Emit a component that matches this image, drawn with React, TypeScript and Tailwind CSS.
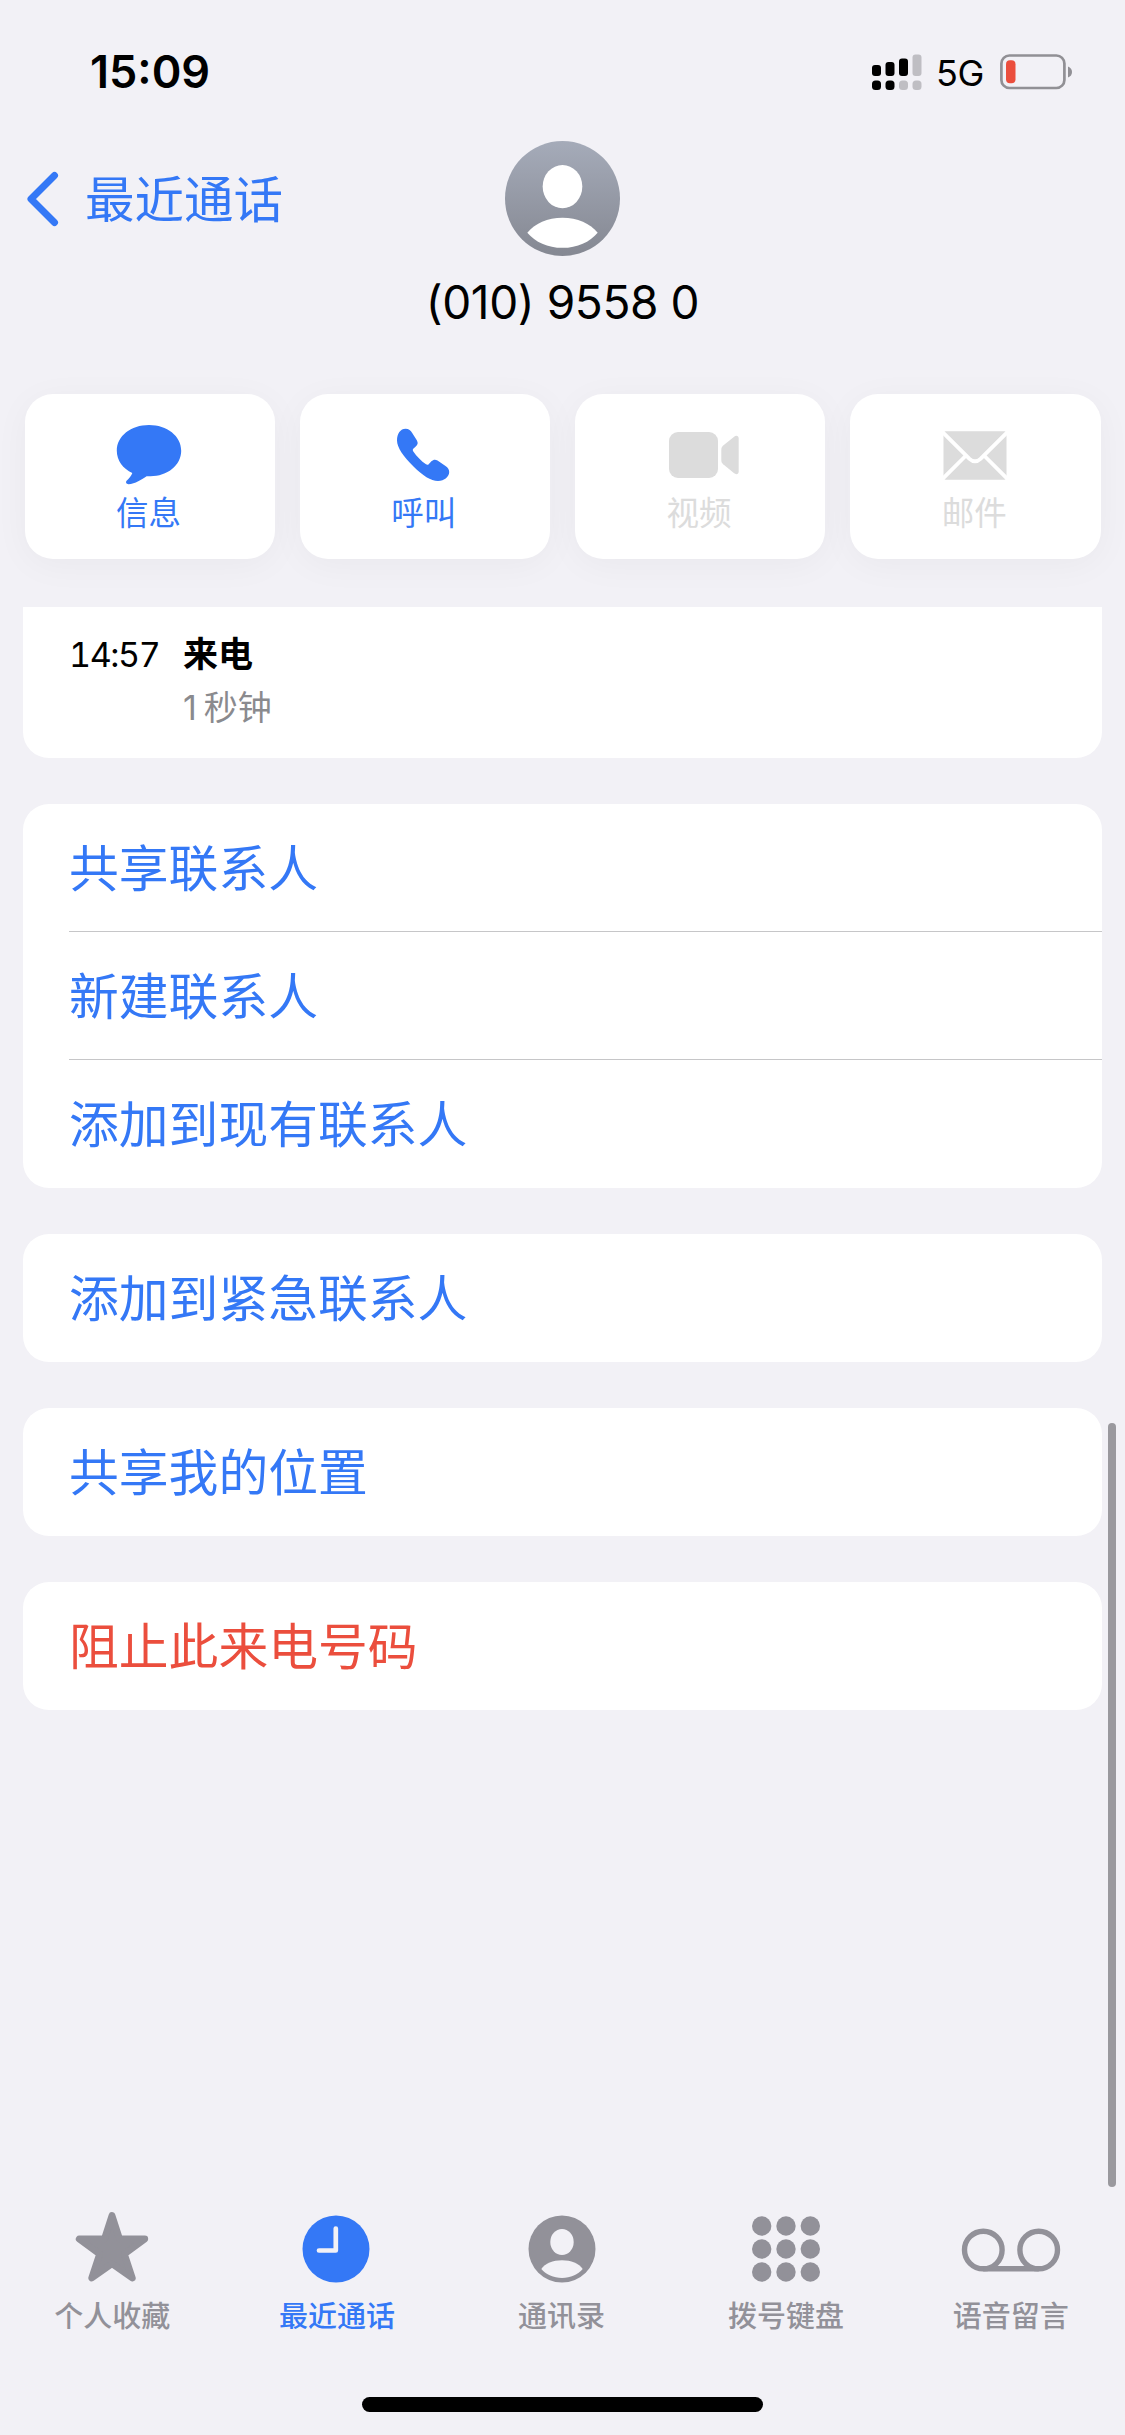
import clsx from "clsx";
import React from "react";

const BubbleIcon: React.FC = () => (
  <svg className="mr-[2px] w-[66px] h-[60px]" viewBox="0 0 66 60" fill="currentColor" aria-hidden="true">
    <path d="M33 0C51 0 65.2 11 65.2 25.7S51 51.2 34.500 51.200C33 51.200 31.800 51.200 30.600 51.300C26 54.500 19 59 12.500 59.200C10.300 59.200 9.400 57.300 10.600 55.800C13 53.300 15.500 50.600 16.300 48C7 43.600 0.800 35.500 0.800 25.700C0.800 11 15 0 33 0Z" />
  </svg>
);

const PhoneIcon: React.FC = () => (
  <svg className="mr-[3px] w-[54px] h-[54px]" viewBox="0 0 54 54" fill="currentColor" aria-hidden="true">
    <path d="M1 12.500C1 5.500 4.500 0.700 9.500 0.700C13 0.700 14.700 2.300 16.200 5L20.800 12.200C22.400 15 21.800 16.800 19.500 18.800L17.500 20.600C16.500 21.500 16.600 22.400 17.300 23.500C20.800 28.700 25.300 33 30 36.300C31.100 37 32 36.900 32.900 35.900L35.400 33.300C37.500 31.300 39.400 31.300 41.500 32.500L49.500 38C52 39.800 53.200 41.300 53.200 44C53.200 48.500 48.500 53 42 53C35 53 26.500 47.500 17.500 38.500C7.500 28.500 1 19.500 1 12.500Z" />
  </svg>
);

const VideoIcon: React.FC = () => (
  <svg className="ml-[7px] w-[70px] h-[46px]" viewBox="0 0 70 46" fill="currentColor" aria-hidden="true">
    <rect width="49" height="46" rx="9" />
    <path d="M52.300 18C52.300 16 52.800 15 54.200 13.600L64.800 4.900C67.500 2.800 69.700 4 69.700 6.800V39.200C69.700 42 67.500 43.200 64.800 41L54.200 32.200C52.800 31 52.300 30 52.300 28Z" />
  </svg>
);

const MailIcon: React.FC = () => (
  <svg className="w-[64px] h-[49px]" viewBox="0 0 64 49" aria-hidden="true">
    <rect x="0.500" y="0.300" width="63" height="48.400" rx="2" fill="currentColor" />
    <path
      d="M-1 0.500L26.500 27.800Q32 32.800 37.500 27.800L65 0.500M-1 48.500L22.500 25M65 48.500L41.500 25"
      fill="none"
      stroke="#fff"
      strokeWidth="3.800"
    />
  </svg>
);

const StarIcon: React.FC = () => (
  <svg className="mb-[5px] w-[74px] h-[72px]" viewBox="0 0 74 72" aria-hidden="true">
    <path
      d="M37 4.500L44.600 28H69.800L49.400 43L57.300 67L37 52.800L16.700 67L24.600 43L4.200 28H29.400Z"
      fill="currentColor"
      stroke="currentColor"
      strokeWidth="6.800"
      strokeLinejoin="round"
    />
  </svg>
);

const ClockIcon: React.FC = () => (
  <svg className="mr-px w-[68px] h-[68px]" viewBox="0 0 68 68" aria-hidden="true">
    <circle cx="34" cy="34" r="33.500" fill="currentColor" />
    <path
      d="M33.800 13.500V35.500H17"
      fill="none"
      stroke="#f2f1f6"
      strokeWidth="4.700"
      strokeLinecap="round"
      strokeLinejoin="round"
    />
  </svg>
);

const ContactIcon: React.FC = () => (
  <svg className="ml-[2px] w-[68px] h-[68px]" viewBox="0 0 68 68" aria-hidden="true">
    <circle cx="34" cy="34" r="33.500" fill="currentColor" />
    <ellipse cx="34" cy="27" rx="11.700" ry="13" fill="#f2f1f6" />
    <path d="M13.300 54C17 48.500 25 45.200 34 45.200S51 48.500 54.700 54C50 59.500 42.500 63 34 63S18 59.500 13.300 54Z" fill="#f2f1f6" />
  </svg>
);

const KeypadIcon: React.FC = () => (
  <svg className="w-[68px] h-[68px]" viewBox="0 0 68 68" fill="currentColor" aria-hidden="true">
    {[11, 34, 57].map((y) =>
      [9.7, 34, 58.3].map((x) => <circle key={`${x}-${y}`} cx={x} cy={y} r="9.700" />)
    )}
  </svg>
);

const VoicemailIcon: React.FC = () => (
  <svg
    className="mt-[2px] w-[100px] h-[44px]"
    viewBox="0 0 100 44"
    fill="none"
    stroke="currentColor"
    strokeWidth="5.400"
    aria-hidden="true"
  >
    <circle cx="22.300" cy="22" r="18.800" />
    <circle cx="77.700" cy="22" r="18.800" />
    <path d="M22.300 40.800H77.700" />
  </svg>
);

const StatusBar: React.FC = () => (
  <div className="flex h-[141px] items-start justify-between pl-[90px] pr-[52px] pt-[42px]">
    <span className="text-[45px] leading-[60px] font-semibold">15:09</span>
    <div className="flex h-[59px] items-center">
      <svg className="w-[50px] h-[36px]" viewBox="0 0 50 36" aria-hidden="true">
        <rect x="0" y="11" width="9" height="11" rx="3" />
        <rect x="13.500" y="8" width="9" height="14" rx="3" />
        <rect x="27" y="4.500" width="9" height="17.500" rx="3" />
        <rect x="40.500" y="0.500" width="9" height="21.500" rx="3" fill="#bfbec3" />
        <rect x="0" y="26.500" width="9" height="9.500" rx="3.500" />
        <rect x="13.500" y="26.500" width="9" height="9.500" rx="3.500" />
        <rect x="27" y="26.500" width="9" height="9.500" rx="3.500" fill="#bfbec3" />
        <rect x="40.500" y="26.500" width="9" height="9.500" rx="3.500" fill="#bfbec3" />
      </svg>
      <span className="ml-[14px] w-[64px] pt-[3px] text-[36px] leading-[44px] tracking-[-0.5px]">5G</span>
      <svg className="w-[73px] h-[36px]" viewBox="0 0 73 36" aria-hidden="true">
        <rect x="1.400" y="1.500" width="63" height="32.500" rx="8" fill="none" stroke="#919095" strokeWidth="2.700" />
        <rect x="6" y="6.200" width="9.500" height="23" rx="4" fill="#eb4e3d" />
        <path d="M68 12.500Q72 14 72 18T68 23.500Z" fill="#919095" />
      </svg>
    </div>
  </div>
);

const ContactHeader: React.FC = () => (
  <header className="h-[253px]">
    <div className="grid h-[116px] grid-cols-3 items-center">
      <button className="flex items-center pl-[25px] text-[#3478f6]">
        <svg className="w-[36px] h-[56px]" viewBox="0 0 36 56" fill="none" aria-hidden="true">
          <path
            d="M29.500 4.500L6 28L29.500 51.500"
            stroke="currentColor"
            strokeWidth="7"
            strokeLinecap="round"
            strokeLinejoin="round"
          />
        </svg>
        <span className="ml-[24px] whitespace-nowrap pt-[2px] text-[49.500px] leading-[60px]">最近通话</span>
      </button>
      <svg className="mb-px mr-px w-[115px] h-[115px] justify-self-center" viewBox="0 0 116 116" aria-hidden="true">
        <defs>
          <linearGradient id="avatar" x1="0" y1="0" x2="0" y2="1">
            <stop offset="0" stopColor="#a5abb9" />
            <stop offset="1" stopColor="#858892" />
          </linearGradient>
        </defs>
        <circle cx="58" cy="58" r="58" fill="url(#avatar)" />
        <ellipse cx="58" cy="46" rx="20" ry="21.800" fill="#fff" />
        <path d="M22.500 92.500C30 83 43 77.300 58 77.300S86 83 93.500 92.500C85.500 102 73 107.800 58 107.800S30.500 102 22.500 92.500Z" fill="#fff" />
      </svg>
    </div>
    <h1 className="mt-[15px] text-center text-[46px] leading-[60px] tracking-[-0.4px]">(010) 9558 0</h1>
  </header>
);

const ACTIONS = [
  { label: "信息", icon: <BubbleIcon />, enabled: true },
  { label: "呼叫", icon: <PhoneIcon />, enabled: true },
  { label: "视频", icon: <VideoIcon />, enabled: false },
  { label: "邮件", icon: <MailIcon />, enabled: false },
];

const QuickActions: React.FC = () => (
  <div className="grid h-[213px] grid-cols-4 items-start gap-[25px] px-[24.500px]">
    {ACTIONS.map((action) => (
      <button
        key={action.label}
        disabled={!action.enabled}
        className={clsx(
          "flex h-[165px] flex-col items-center rounded-[28px] bg-white pt-[30px] shadow-[0_6px_36px_rgba(0,0,0,0.04)]",
          action.enabled ? "text-[#3478f6]" : "text-[#dcdcdc]"
        )}
      >
        <span className="flex h-[62px] items-center">{action.icon}</span>
        <span className="mt-[4px] pr-[2px] text-[32.500px] leading-[48px]">{action.label}</span>
      </button>
    ))}
  </div>
);

const GROUPS = [
  ["共享联系人", "新建联系人", "添加到现有联系人"],
  ["添加到紧急联系人"],
  ["共享我的位置"],
];

const Row: React.FC<{ label: string; danger?: boolean }> = ({ label, danger }) => (
  <li className="group pl-[46px]">
    <button
      className={clsx(
        "flex h-[128px] w-full items-center border-b border-[#c6c6c8] pt-[4px] text-[49.800px] group-last:border-transparent",
        danger ? "text-[#eb4e3d]" : "text-[#3478f6]"
      )}
    >
      {label}
    </button>
  </li>
);

const TABS = [
  { label: "个人收藏", icon: <StarIcon /> },
  { label: "最近通话", icon: <ClockIcon />, active: true },
  { label: "通讯录", icon: <ContactIcon /> },
  { label: "拨号键盘", icon: <KeypadIcon /> },
  { label: "语音留言", icon: <VoicemailIcon /> },
];

const TabBar: React.FC = () => (
  <nav className="mr-[2px] grid h-[191px] grid-cols-5">
    {TABS.map((tab) => (
      <button
        key={tab.label}
        className={clsx(
          "flex flex-col items-center",
          tab.active ? "text-[#3478f6]" : "text-[#929199]"
        )}
      >
        <span className="flex h-[86px] items-center">{tab.icon}</span>
        <span className="mt-[2px] text-[29px] leading-[46px] font-medium">{tab.label}</span>
      </button>
    ))}
  </nav>
);

export default function App() {
  return (
    <div className="relative flex h-[2435px] w-[1125px] flex-col overflow-hidden bg-[#f2f1f6] font-['Inter','Noto_Sans_CJK_SC',sans-serif] text-black">
      <StatusBar />
      <ContactHeader />
      <QuickActions />

      <main className="relative flex flex-1 flex-col gap-[46px] px-[23px]">
        <section className="flex h-[151px] rounded-b-[26px] bg-white pl-[46px] pt-[21px] text-[34px] leading-[53px]">
          <time className="w-[114px] tabular-nums tracking-[-1.4px]">14:57</time>
          <div>
            <p className="text-[35px] font-bold">来电</p>
            <p className="text-[#8a8a8e]">
              <span className="mr-[7px]">1</span>秒钟
            </p>
          </div>
        </section>
        {GROUPS.map((rows) => (
          <ul key={rows[0]} className="rounded-[26px] bg-white">
            {rows.map((label) => (
              <Row key={label} label={label} />
            ))}
          </ul>
        ))}
        <ul className="rounded-[26px] bg-white">
          <Row label="阻止此来电号码" danger />
        </ul>
      </main>

      <TabBar />
      <div className="flex h-[38px] items-start justify-center">
        <div className="h-[15px] w-[401px] rounded-full bg-black" />
      </div>

      {/* scroll indicator */}
      <div className="absolute right-[9px] top-[1423px] h-[764px] w-[8px] rounded-full bg-[#9a999e]" />
    </div>
  );
}
